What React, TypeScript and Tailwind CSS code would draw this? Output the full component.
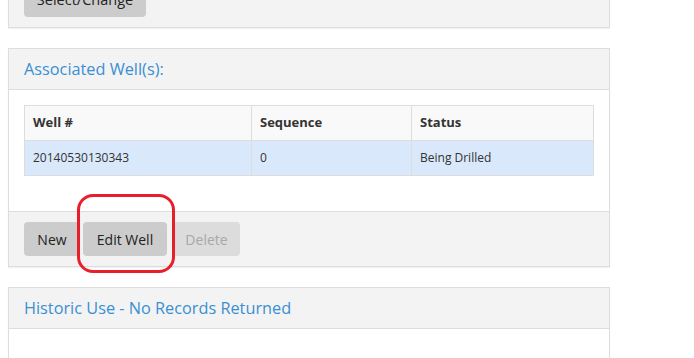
import React from "react";

const font = { fontFamily: '"Open Sans", "Liberation Sans", sans-serif' };

interface WellRow {
  well: string;
  sequence: string;
  status: string;
}

const wells: WellRow[] = [{ well: "20140530130343", sequence: "0", status: "Being Drilled" }];

const PanelTitle: React.FC<{ title: string }> = ({ title }) => (
  <div className="h-[41px] px-[15px] flex items-center bg-[#f3f3f3] border-b border-[#dddddd]">
    <h3 className="text-[16.3px] leading-5 text-[#3a8fd3]">{title}</h3>
  </div>
);

const App: React.FC = () => {
  return (
    <div className="w-[694px] h-[358px] overflow-hidden bg-white text-[#333333]" style={font}>
      <div className="w-[602px] ml-2">
        {/* top panel, mostly scrolled out of view */}
        <div className="-mt-[29px] bg-[#f3f3f3] border border-[#dddddd] shadow-[0_1px_1px_rgba(0,0,0,0.05)] px-[15px] pt-[11px] pb-[10px]">
          <button className="h-[34px] w-[122px] rounded bg-[#cccccc] text-[14.5px] text-[#222222]">
            Select/Change
          </button>
        </div>

        {/* associated wells */}
        <div className="mt-5 border border-[#dddddd] shadow-[0_1px_1px_rgba(0,0,0,0.05)]">
          <PanelTitle title="Associated Well(s):" />
          <div className="bg-white p-[15px] pb-[35px]">
            <table className="w-full border-collapse border border-[#dddddd] text-[12px]">
              <thead>
                <tr className="h-[35px] bg-[#f9f9f9] text-[13px]">
                  <th className="w-[227px] border border-[#dddddd] px-2 text-left font-bold">Well #</th>
                  <th className="w-[160px] border border-[#dddddd] px-2 text-left font-bold">Sequence</th>
                  <th className="border border-[#dddddd] px-2 text-left font-bold">Status</th>
                </tr>
              </thead>
              <tbody>
                {wells.map((w) => (
                  <tr key={w.well} className="h-[35px] bg-[#d9e9fb]">
                    <td className="border border-[#dddddd] px-2">{w.well}</td>
                    <td className="border border-[#dddddd] px-2">{w.sequence}</td>
                    <td className="border border-[#dddddd] px-2">{w.status}</td>
                  </tr>
                ))}
              </tbody>
            </table>
          </div>
          <div className="relative bg-[#f3f3f3] border-t border-[#dddddd] px-[15px] pt-[10px] pb-[10px] flex">
            <button className="h-[34px] w-[56px] rounded bg-[#cccccc] text-[14px] text-[#222222]">New</button>
            <button className="ml-[3px] h-[34px] w-[84px] rounded bg-[#cccccc] text-[14px] text-[#222222]">
              Edit Well
            </button>
            <button disabled className="ml-[6px] h-[34px] w-[67px] rounded bg-[#dcdcdc] text-[14px] text-[#a8a8a8]">
              Delete
            </button>
            {/* annotation */}
            <div className="absolute left-[68px] -top-[18px] w-[98px] h-[79px] rounded-[16px] border-[3px] border-[#e81f2a]" />
          </div>
        </div>

        {/* historic use */}
        <div className="mt-5 border border-[#dddddd] shadow-[0_1px_1px_rgba(0,0,0,0.05)]">
          <PanelTitle title="Historic Use - No Records Returned" />
          <div className="bg-white h-[60px]" />
        </div>
      </div>
    </div>
  );
};

export default App;
